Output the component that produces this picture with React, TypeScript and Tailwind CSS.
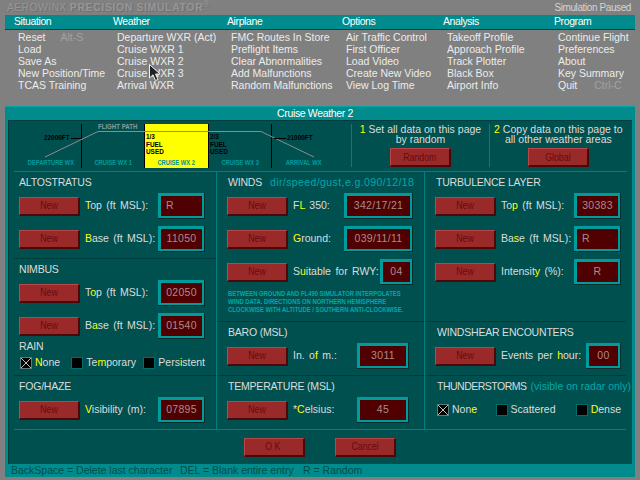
const FONT = "font-['Liberation_Sans',Arial,sans-serif]"

const menus = [
    { title: 'Situation', w: 'w-[99px]', items: ['Reset', 'Load', 'Save As', 'New Position/Time', 'TCAS Training'] },
    { title: 'Weather', w: 'w-[114px]', items: ['Departure WXR (Act)', 'Cruise WXR 1', 'Cruise WXR 2', 'Cruise WXR 3', 'Arrival WXR'] },
    { title: 'Airplane', w: 'w-[115px]', items: ['FMC Routes In Store', 'Preflight Items', 'Clear Abnormalities', 'Add Malfunctions', 'Random Malfunctions'] },
    { title: 'Options', w: 'w-[101px]', items: ['Air Traffic Control', 'First Officer', 'Load Video', 'Create New Video', 'View Log Time'] },
    { title: 'Analysis', w: 'w-[111px]', items: ['Takeoff Profile', 'Approach Profile', 'Track Plotter', 'Black Box', 'Airport Info'] },
    { title: 'Program', w: 'w-[70px]', items: ['Continue Flight', 'Preferences', 'About', 'Key Summary', 'Quit'] },
]

// one letter of a label is the keyboard shortcut, drawn yellow
const Hot = ({ pre = '', hot, post = '' }: { pre?: string; hot: string; post?: string }) => (
    <span className="whitespace-pre">
        {pre}
        <span className="text-[#ffff00]">{hot}</span>
        {post}
    </span>
)

const RedButton = ({ label, textClass = '' }: { label: string; textClass?: string }) => (
    <div className="w-[61px] h-[19px] shrink-0 flex items-center justify-center bg-[#9a2a2a] border-t border-l border-t-[#b84848] border-l-[#b84848] border-b-2 border-r-2 border-b-[#4a0808] border-r-[#4a0808] text-[#660a0a] text-[11px]">
        <span className={`inline-block scale-x-[0.8] ${textClass}`}>{label}</span>
    </div>
)

const ValueBox = ({ value, className = 'w-[47px]', align = 'text-center' }: { value: string; className?: string; align?: string }) => (
    <div className={`${className} h-[26px] shrink-0 bg-[#009c9c] border-b border-r border-b-[#002c2c] border-r-[#002c2c] p-[3px] pb-[2px] pr-[2px]`}>
        <div className={`h-full bg-[#500000] text-[#a88c8c] text-[10.5px] leading-[19px] tracking-[0.3px] px-[5px] whitespace-nowrap ${align}`}>{value}</div>
    </div>
)

const Row = ({ children, value, boxW, align }: { children: React.ReactNode; value: string; boxW?: string; align?: string }) => (
    <div className="flex items-center h-[26px]">
        <RedButton label="New" />
        <div className="flex-1 min-w-0 pl-[5px] text-[#dcdcdc] text-[10.5px] [word-spacing:1.5px] whitespace-nowrap">{children}</div>
        <ValueBox value={value} className={boxW} align={align} />
    </div>
)

const Heading = ({ children, className = 'h-[21px]' }: { children: React.ReactNode; className?: string }) => (
    <div className={`${className} flex items-center text-[#dcdcdc] text-[10.5px] tracking-[-0.2px] whitespace-nowrap`}>{children}</div>
)

const Check = ({ on, className = '', children }: { on?: boolean; className?: string; children: React.ReactNode }) => (
    <div className={`flex items-center ${className}`}>
        <div className={`w-[12px] h-[12px] shrink-0 bg-black border ${on ? 'border-[#5c7c7c]' : 'border-[#006c6c]'}`}>
            {on && (
                <svg viewBox="0 0 10 10" className="w-[10px] h-[10px]">
                    <path d="M0 0L10 10M10 0L0 10" stroke="#c4c4c4" strokeWidth="1" />
                </svg>
            )}
        </div>
        <span className="pl-[3px] text-[#dcdcdc] text-[10.5px] whitespace-nowrap">{children}</span>
    </div>
)

const stripLabels = ['DEPARTURE WX', 'CRUISE WX 1', 'CRUISE WX 2', 'CRUISE WX 3', 'ARRIVAL WX']

const FlightStrip = () => (
    <div className="relative flex h-[51px] pt-[3px] border-b border-[#008080] ml-[5px] mr-[5px]">
        {stripLabels.map((name, i) => (
            <div
                key={name}
                className={`relative h-[44px] ${i === 0 ? 'w-[69px]' : 'w-[64px]'} ${i === 2 ? 'bg-[#ffff00]' : ''} ${i === 4 ? '' : 'border-r border-black'}`}
            >
                <div className={`absolute left-0 right-0 bottom-0 text-center font-bold text-[8px] leading-[10px] whitespace-nowrap scale-x-[0.72] ${i === 2 ? 'text-[#0090a0]' : 'text-[#009c9c]'} ${i === 0 ? 'pl-[6px]' : ''}`}>
                    {name}
                </div>
                {(i === 2 || i === 3) && (
                    <div className="absolute left-[1px] top-[9px] text-black font-bold text-[8px] leading-[7.5px] scale-x-[0.8] origin-left">
                        {i === 2 ? '1/3' : '2/3'}
                        <br />
                        FUEL
                        <br />
                        USED
                    </div>
                )}
            </div>
        ))}

        {/* flight path drawn over the cells */}
        <svg className="absolute left-0 top-0 w-[330px] h-[50px] pointer-events-none" viewBox="0 0 330 50">
            <path d="M31 36L84 10.5L247 10.5L300 36" fill="none" stroke="#8c8c8c" strokeWidth="1" />
            <path d="M57 17.5H68" stroke="#000" strokeWidth="1" />
            <path d="M260 17.5H272" stroke="#000" strokeWidth="1" />
        </svg>
        <div className="absolute left-[84px] top-[1px] text-[#8c9c9c] font-bold text-[8px] leading-[10px] scale-x-[0.76] origin-left whitespace-nowrap">FLIGHT PATH</div>
        <div className="absolute left-[30px] top-[12px] text-black font-bold text-[8px] leading-[10px] scale-x-[0.8] origin-left">22000FT</div>
        <div className="absolute left-[273px] top-[12px] text-black font-bold text-[8px] leading-[10px] scale-x-[0.8] origin-left">21000FT</div>

        <div className="ml-[16px] w-[139px] h-[43px] border-l border-[#008080] flex flex-col items-center text-[#dcdcdc] text-[10.5px] leading-[10px]">
            <div className="whitespace-nowrap"><span className="text-[#ffff00]">1</span> Set all data on this page</div>
            <div className="whitespace-nowrap">by random</div>
            <div className="mt-[4px]"><RedButton label="Random" /></div>
        </div>
        <div className="w-[140px] h-[43px] border-l border-[#008080] flex flex-col items-center text-[#dcdcdc] text-[10.5px] leading-[10px]">
            <div className="whitespace-nowrap"><span className="text-[#ffff00]">2</span> Copy data on this page to</div>
            <div className="whitespace-nowrap">all other weather areas</div>
            <div className="mt-[4px]"><RedButton label="Global" /></div>
        </div>
    </div>
)

const App = () => (
    <div className={`relative w-[640px] h-[480px] overflow-hidden bg-[#808080] ${FONT}`}>
        <div className="flex justify-between h-[15px] pl-[7px] pr-[9px] items-center">
            <div className="text-[#969696] text-[10.5px] tracking-[0.3px] whitespace-nowrap leading-none [text-shadow:1px_1px_0_#707070]">
                AEROWINX <span className="font-bold tracking-[0.6px]">PRECISION SIMULATOR</span>
                <sup className="text-[9px]">®</sup>
            </div>
            <div className="text-[#d4d4d4] text-[10px] tracking-[-0.4px]">Simulation Paused</div>
        </div>

        <div className="mx-[5px] h-[15px] bg-[#008c8c] border-b border-[#004848] flex items-center pl-[9px] text-white text-[10.5px] tracking-[-0.4px]">
            {menus.map((m) => (
                <div key={m.title} className={`${m.w} shrink-0`}>{m.title}</div>
            ))}
        </div>

        <div className="flex pl-[18px] pt-[1px] h-[76px] text-[#ececec] text-[10.5px] leading-[12px]">
            {menus.map((m) => (
                <div key={m.title} className={`${m.w} shrink-0 whitespace-nowrap`}>
                    {m.items.map((it) => (
                        <div key={it} className="h-[12px]">
                            {it}
                            {it === 'Reset' && <span className="text-[#a0a0a0] ml-[15px]">Alt-S</span>}
                            {it === 'Quit' && <span className="text-[#a0a0a0] ml-[17px]">Ctrl-C</span>}
                        </div>
                    ))}
                </div>
            ))}
        </div>

        <div className="mx-[5px] h-[371px] bg-[#008c8c] border-t border-t-[#00a4a4] flex flex-col">
            <div className="h-[13px] flex items-center justify-center pr-[10px] text-white text-[10.5px] tracking-[-0.35px]">Cruise Weather 2</div>
            <div className="mx-[3px] flex-1 bg-[#005050] border-l border-t border-[#003c3c] flex flex-col">
                <FlightStrip />

                <div className="flex ml-[5px] w-[612px] border-b border-[#008080]">
                    <div className="w-[203px] border-r border-[#008080] shrink-0">
                        <section className="pl-[5px] pr-[11px] pb-[6px] border-b border-[#003c3c]">
                            <Heading>ALTOSTRATUS</Heading>
                            <div className="flex flex-col gap-[7px]">
                                <Row value="R" align="text-left"><Hot hot="T" post="op (ft MSL):" /></Row>
                                <Row value="11050"><Hot hot="B" post="ase (ft MSL):" /></Row>
                            </div>
                        </section>
                        <section className="pl-[5px] pr-[11px] pb-[6px] border-b border-[#003c3c]">
                            <Heading>NIMBUS</Heading>
                            <div className="flex flex-col gap-[7px]">
                                <Row value="02050"><Hot pre="T" hot="o" post="p (ft MSL):" /></Row>
                                <Row value="01540"><Hot pre="B" hot="a" post="se (ft MSL):" /></Row>
                            </div>
                            <Heading className="h-[16px]">RAIN</Heading>
                            <div className="flex mt-[2px] h-[12px]">
                                <Check on className="w-[52px] ml-[1px]"><Hot hot="N" post="one" /></Check>
                                <Check className="w-[73px]"><Hot pre="Te" hot="m" post="porary" /></Check>
                                <Check><Hot pre="Pers" hot="i" post="stent" /></Check>
                            </div>
                        </section>
                        <section className="pl-[5px] pr-[11px] pb-[6px]">
                            <Heading>FOG/HAZE</Heading>
                            <Row value="07895"><Hot hot="V" post="isibility (m):" /></Row>
                        </section>
                    </div>

                    <div className="w-[208px] border-r border-[#008080] shrink-0">
                        <section className="pl-[10px] pr-[11px] h-[150px] border-b border-[#003c3c]">
                            <Heading>
                                <span className="ml-[1px]">WINDS</span>
                                <span className="ml-[8px] text-[#00a8a8] tracking-[0.4px]">dir/speed/gust,e.g.090/12/18</span>
                            </Heading>
                            <div className="flex flex-col gap-[7px]">
                                <Row value="342/17/21" boxW="w-[69px]"><Hot pre="F" hot="L" post=" 350:" /></Row>
                                <Row value="039/11/11" boxW="w-[69px]"><Hot hot="G" post="round:" /></Row>
                                <Row value="04" boxW="w-[33px]"><Hot pre="S" hot="u" post="itable for RWY:" /></Row>
                            </div>
                            <div className="mt-[5px] ml-[1px] text-[#00a8a8] font-bold text-[8px] leading-[8px] whitespace-nowrap scale-x-[0.735] origin-left">
                                BETWEEN GROUND AND FL490 SIMULATOR INTERPOLATES
                                <br />
                                WIND DATA. DIRECTIONS ON NORTHERN HEMISPHERE
                                <br />
                                CLOCKWISE WITH ALTITUDE / SOUTHERN ANTI-CLOCKWISE.
                            </div>
                        </section>
                        <section className="pl-[10px] pr-[15px] pb-[6px] border-b border-[#003c3c]">
                            <Heading><span className="ml-[1px]">BARO (MSL)</span></Heading>
                            <Row value="3011" boxW="w-[52px]"><Hot pre="In. o" hot="f" post=" m.:" /></Row>
                        </section>
                        <section className="pl-[10px] pr-[15px] pb-[6px]">
                            <Heading><span className="ml-[1px]">TEMPERATURE (MSL)</span></Heading>
                            <Row value="45" boxW="w-[52px]"><Hot pre="*" hot="C" post="elsius:" /></Row>
                        </section>
                    </div>

                    <div className="w-[201px] shrink-0">
                        <section className="pl-[10px] pr-[5px] h-[150px] border-b border-[#003c3c]">
                            <Heading><span className="ml-[1px]">TURBULENCE LAYER</span></Heading>
                            <div className="flex flex-col gap-[7px]">
                                <Row value="30383"><Hot pre="To" hot="p" post=" (ft MSL):" /></Row>
                                <Row value="R" align="text-left"><Hot pre="Ba" hot="s" post="e (ft MSL):" /></Row>
                                <Row value="R"><Hot pre="Intensit" hot="y" post=" (%):" /></Row>
                            </div>
                        </section>
                        <section className="pl-[10px] pr-[5px] pb-[6px] border-b border-[#003c3c]">
                            <Heading><span className="ml-[2px]">WINDSHEAR ENCOUNTERS</span></Heading>
                            <Row value="00" boxW="w-[35px]"><Hot pre="Events per " hot="h" post="our:" /></Row>
                        </section>
                        <section className="pl-[12px] pr-[5px]">
                            <Heading>
                                <span className="tracking-[-0.5px]">THUNDERSTORMS</span>
                                <span className="ml-[4px] text-[#00a8a8] tracking-normal">(visible on radar only)</span>
                            </Heading>
                            <div className="flex mt-[7px] h-[12px]">
                                <Check on className="w-[60px]"><Hot pre="Non" hot="e" /></Check>
                                <Check className="w-[82px]"><Hot pre="Scatte" hot="r" post="ed" /></Check>
                                <Check><Hot hot="D" post="ense" /></Check>
                            </div>
                        </section>
                    </div>
                </div>

                <div className="flex-1 flex items-center justify-center gap-[30px] pr-[1px]">
                    <RedButton label="OK" textClass="tracking-[3px]" />
                    <RedButton label="Cancel" />
                </div>
            </div>
            <div className="h-[13px] flex items-center pl-[6px] text-[#004c4c] text-[10.5px] whitespace-pre">
                <span className="w-[169px]">BackSpace = Delete last character</span>
                <span className="w-[123px]">DEL = Blank entire entry</span>
                <span>R = Random</span>
            </div>
        </div>

        {/* mouse pointer */}
        <svg className="absolute left-[149px] top-[64px] w-[12px] h-[18px]" viewBox="0 0 12 18">
            <path d="M0.5 0.5V14L4 10.8L6.5 16.5L9 15.5L6.5 10H11Z" fill="#222" stroke="#eee" strokeWidth="1" />
        </svg>
    </div>
)

export default App
